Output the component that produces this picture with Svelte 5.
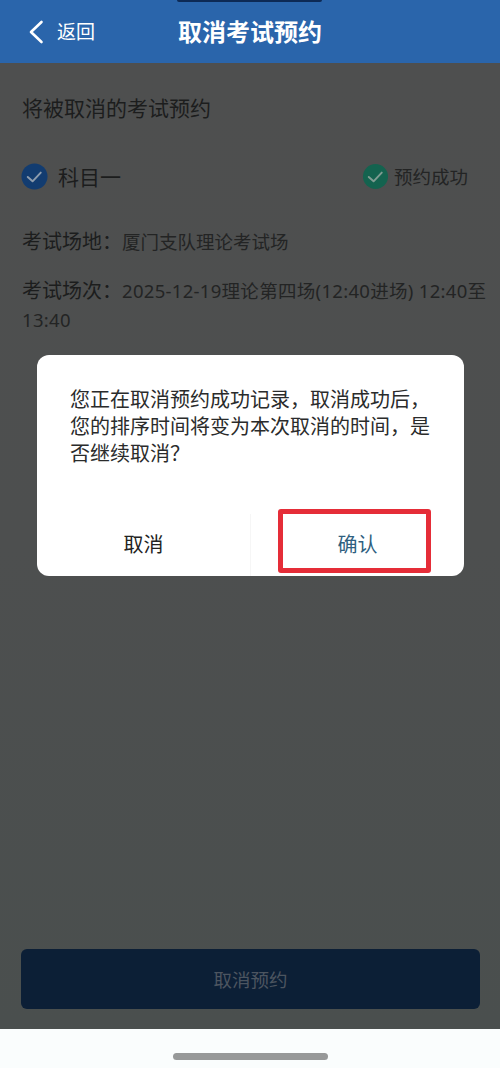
<script lang="ts">
    const dialogText = '您正在取消预约成功记录，取消成功后，您的排序时间将变为本次取消的时间，是否继续取消？';
</script>

<div class="screen">
    <header class="topbar">
        <div class="notch"></div>
        <div class="back">
            <svg width="16" height="24" viewBox="0 0 16 24" fill="none">
                <path d="M13.5 2 L3 12 L13.5 22" stroke="#fff" stroke-width="2.6" stroke-linecap="round" stroke-linejoin="round" />
            </svg>
            <span>返回</span>
        </div>
        <h1>取消考试预约</h1>
    </header>

    <main class="content">
        <h2>将被取消的考试预约</h2>

        <div class="subject">
            <div class="subject-name">
                <svg class="check" viewBox="0 0 28 28">
                    <circle cx="14" cy="14" r="13.5" fill="#123c70" />
                    <path d="M7 14.5 L12 19 L20.5 10" fill="none" stroke="#8d9cad" stroke-width="2" stroke-linecap="round" stroke-linejoin="round" />
                </svg>
                <span>科目一</span>
            </div>
            <div class="subject-status">
                <svg class="check" viewBox="0 0 28 28">
                    <circle cx="14" cy="14" r="13" fill="#14634f" />
                    <path d="M7 14.5 L12 19 L20.5 10" fill="none" stroke="#7f9c92" stroke-width="2" stroke-linecap="round" stroke-linejoin="round" />
                </svg>
                <span>预约成功</span>
            </div>
        </div>

        <p class="row venue"><span class="label">考试场地：</span>厦门支队理论考试场</p>
        <p class="row session"><span class="label">考试场次：</span><span class="slot">2025-12-19理论第四场(12:40进场) 12:40至13:40</span></p>

        <div class="spacer"></div>

        <button class="submit">取消预约</button>
    </main>

    <footer class="homebar">
        <div class="handle"></div>
    </footer>

    <div class="overlay">
        <div class="dialog">
            <p class="message">{dialogText}</p>
            <div class="actions">
                <button class="cancel">取消</button>
                <button class="confirm">确认</button>
            </div>
            <div class="highlight"></div>
        </div>
    </div>
</div>

<style>
    :global(body) {
        margin: 0;
        background: #fafdfd;
    }

    .screen {
        position: relative;
        width: 500px;
        height: 1068px;
        display: flex;
        flex-direction: column;
        overflow: hidden;
        font-family: "Noto Sans", "Noto Sans CJK SC", sans-serif;
    }

    .topbar {
        position: relative;
        height: 63px;
        flex: none;
        background: #2a65ab;
        display: flex;
        align-items: center;
        justify-content: center;
        color: #fff;
    }

    .notch {
        position: absolute;
        top: 0;
        left: 177px;
        width: 145px;
        height: 2px;
        background: #0d2a55;
        border-radius: 0 0 4px 4px;
    }

    .back {
        position: absolute;
        left: 28px;
        top: 19px;
        display: flex;
        align-items: center;
        gap: 13px;
        font-size: 19px;
        line-height: 26px;
    }

    h1 {
        margin: 0;
        font-size: 24px;
        font-weight: 700;
        line-height: 32px;
    }

    .content {
        flex: 1;
        display: flex;
        flex-direction: column;
        padding: 30px 12px 0 22px;
        background: linear-gradient(#4e4f4f, #4d4f4f 50%, #4a4f4e);
        color: #1c1d1d;
    }

    h2 {
        margin: 0;
        font-size: 21px;
        font-weight: 400;
        line-height: 30px;
    }

    .subject {
        display: flex;
        align-items: center;
        justify-content: space-between;
        margin-top: 39px;
        margin-left: -1px;
        padding-right: 20px;
        height: 28px;
    }

    .subject-name,
    .subject-status {
        display: flex;
        align-items: center;
    }

    .subject-name {
        gap: 10px;
        font-size: 21px;
    }

    .subject-status {
        gap: 5px;
        font-size: 18.5px;
        color: #232424;
    }

    .check {
        width: 27px;
        height: 27px;
        flex: none;
    }

    .row {
        margin: 0;
        font-size: 18.5px;
        line-height: 29px;
        color: #232424;
    }

    .venue {
        margin-top: 37px;
    }

    .session {
        margin-top: 20px;
    }

    .label {
        font-size: 20px;
        color: #1c1d1d;
    }

    .slot {
        letter-spacing: 0.3px;
    }

    .spacer {
        flex: 1;
    }

    .submit {
        flex: none;
        height: 60px;
        width: 459px;
        margin: 0 0 20px -1px;
        border: none;
        border-radius: 6px;
        background: #0c1f36;
        color: #4c5560;
        font: inherit;
        font-size: 18.5px;
    }

    .homebar {
        flex: none;
        height: 39px;
        background: #fafdfd;
        display: flex;
        justify-content: center;
        padding-top: 24px;
        box-sizing: border-box;
    }

    .handle {
        width: 155px;
        height: 7px;
        border-radius: 4px;
        background: #979999;
    }

    .overlay {
        position: absolute;
        top: 355px;
        left: 37px;
    }

    .dialog {
        position: relative;
        width: 427px;
        height: 221px;
        box-sizing: border-box;
        padding: 31px 33px 0;
        background: #fff;
        border-radius: 12px;
        display: flex;
        flex-direction: column;
    }

    .message {
        margin: 0;
        font-size: 20px;
        line-height: 27px;
        color: #2a2b2b;
    }

    .actions {
        position: absolute;
        left: 0;
        right: 0;
        bottom: 0;
        height: 62px;
        display: flex;
    }

    .actions button {
        flex: 1;
        border: none;
        background: none;
        font: inherit;
        font-size: 20px;
        padding: 0 0 4px;
    }

    .cancel {
        color: #222;
        border-right: 1px solid #f6f6f6 !important;
    }

    .confirm {
        color: #2f5f80;
    }

    .highlight {
        position: absolute;
        left: 241px;
        top: 154px;
        width: 153px;
        height: 64px;
        box-sizing: border-box;
        border: 5px solid #e52d38;
        border-radius: 3px;
    }
</style>
